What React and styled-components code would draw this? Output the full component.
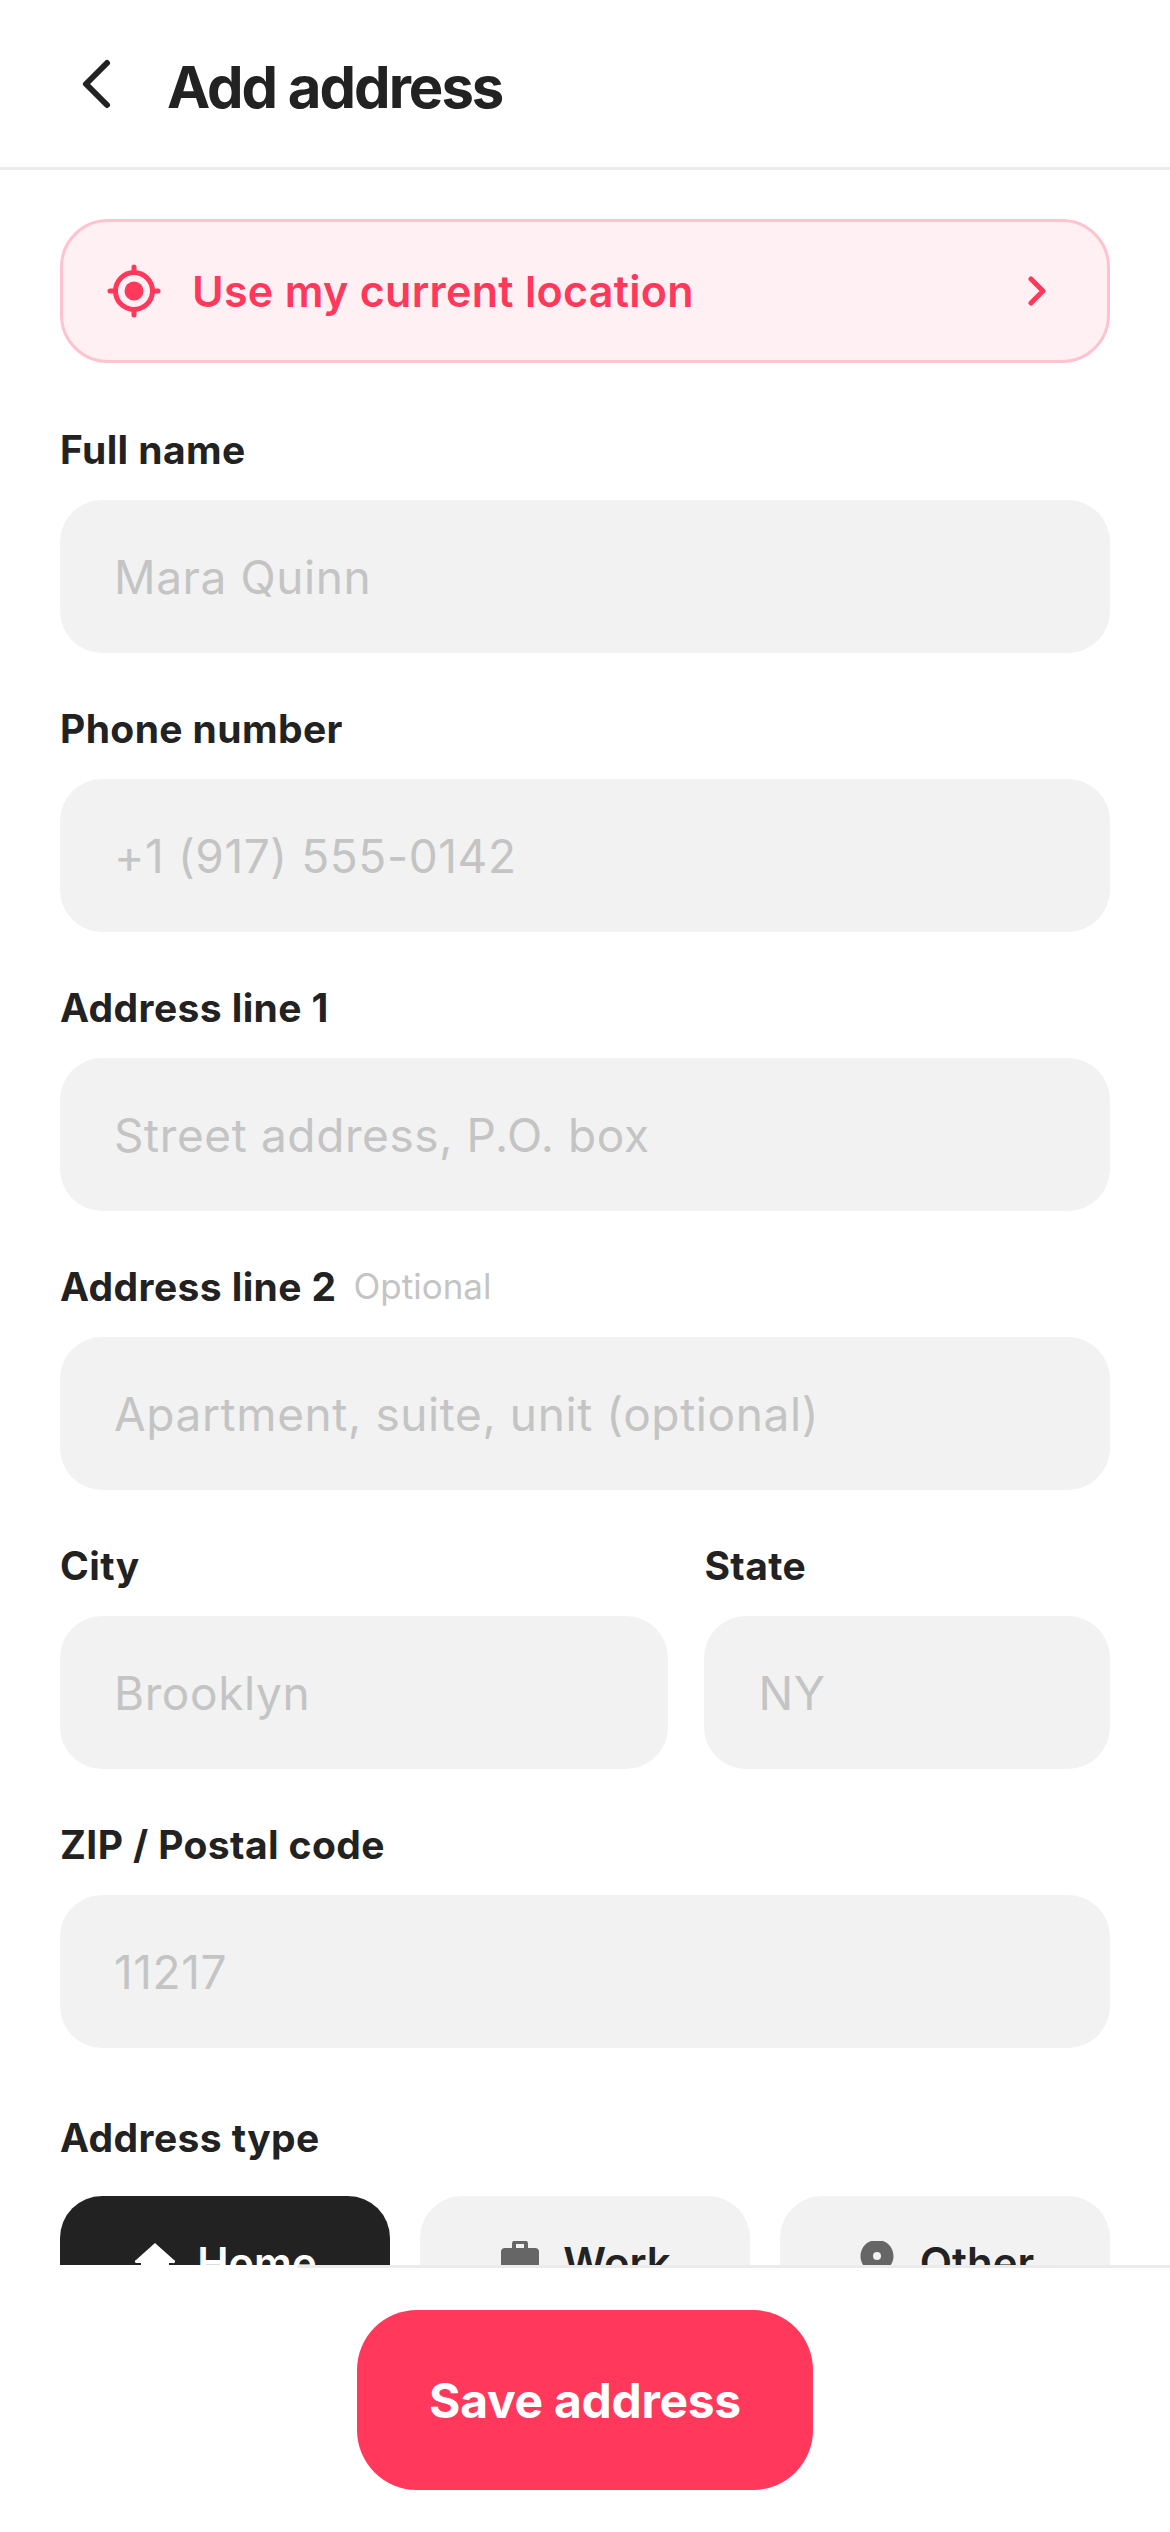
import React from "react";
import styled, { createGlobalStyle } from "styled-components";

const Global = createGlobalStyle`
    html, body { margin: 0; padding: 0; background: #fff; }
    * { box-sizing: border-box; }
`;

const Screen = styled.div`
    width: 1170px;
    height: 2532px;
    display: flex;
    flex-direction: column;
    background: #fff;
    color: #222;
    font-family: Inter, "Noto Sans", sans-serif;
    overflow: hidden;
`;
const Header = styled.header`
    height: 170px;
    flex: none;
    display: flex;
    align-items: center;
    gap: 46px;
    padding-left: 79px;
    border-bottom: 3px solid #ebebeb;
`;
const Title = styled.h1`
    margin: 0;
    padding-top: 6px;
    font-size: 58px;
    font-weight: 750;
    letter-spacing: -2px;
    line-height: 1;
`;
const Scroll = styled.main`
    flex: 1;
    min-height: 0;
    overflow: hidden;
    padding: 49px 60px 0;
`;
const LocationCard = styled.div`
    height: 144px;
    display: flex;
    align-items: center;
    padding: 0 58px 0 44px;
    background: #fff0f3;
    border: 3px solid #ffc2cf;
    border-radius: 48px;
    color: #ff385c;
    margin-bottom: 59px;
`;
const LocationText = styled.span`
    flex: 1;
    margin-left: 31px;
    font-size: 43px;
    font-weight: 600;
    letter-spacing: 0.3px;
`;
const Form = styled.div`
    display: flex;
    flex-direction: column;
    gap: 48px;
`;
const Row = styled.div`
    display: flex;
    gap: 36px;
`;
const Field = styled.div`
    flex: ${p => p.$flex || 1};
    min-width: 0;
`;
const Label = styled.div`
    height: 54px;
    margin-bottom: 24px;
    display: flex;
    align-items: center;
    gap: 17px;
    font-size: 39px;
    font-weight: 700;
    letter-spacing: 0.4px;
`;
const Hint = styled.span`
    font-size: 35px;
    font-weight: 400;
    color: #c4c4c4;
    letter-spacing: 0;
`;
const InputBox = styled.div`
    height: 153px;
    display: flex;
    align-items: center;
    padding: 0 54px;
    background: #f2f2f2;
    border-radius: 42px;
    font-size: 46px;
    letter-spacing: 0.6px;
    color: #c4c4c4;
`;
const TypeLabel = styled(Label)`
    margin-top: 62px;
    margin-bottom: 32px;
`;
const Chips = styled.div`
    display: grid;
    grid-template-columns: repeat(3, 1fr);
    gap: 30px;
`;
const Chip = styled.div`
    height: 132px;
    display: flex;
    align-items: center;
    justify-content: center;
    gap: 22px;
    border-radius: 42px;
    background: ${p => (p.$active ? "#222" : "#f2f2f2")};
    color: ${p => (p.$active ? "#fff" : "#222")};
    font-size: 42px;
    font-weight: 600;
`;
const Footer = styled.footer`
    flex: none;
    height: 267px;
    background: #fff;
`;
const FooterRule = styled.div`
    height: 3px;
    margin-left: 297px;
    background: #ebebeb;
`;
const SaveRow = styled.div`
    display: flex;
    justify-content: center;
    padding-top: 42px;
`;
const SaveButton = styled.button`
    width: 456px;
    height: 180px;
    border: 0;
    border-radius: 60px;
    background: #ff385c;
    color: #fff;
    font-family: inherit;
    font-size: 48px;
    font-weight: 700;
    letter-spacing: -0.3px;
`;

const BackIcon = () => (
    <svg width="42" height="54" viewBox="0 0 42 54" fill="none">
        <path d="M28 6 L7 27 L28 48" stroke="#222" strokeWidth="6" strokeLinecap="round" strokeLinejoin="round" />
    </svg>
);
const TargetIcon = () => (
    <svg width="54" height="54" viewBox="0 0 54 54" fill="none">
        <circle cx="27" cy="27" r="18.5" stroke="#ff385c" strokeWidth="5" />
        <circle cx="27" cy="27" r="9.5" fill="#ff385c" />
        <path d="M27 3v5M27 46v5M3 27h5M46 27h5" stroke="#ff385c" strokeWidth="5" strokeLinecap="round" />
    </svg>
);
const ChevronIcon = () => (
    <svg width="24" height="30" viewBox="0 0 24 30" fill="none">
        <path d="M6 3 L18 15 L6 27" stroke="#ff385c" strokeWidth="5" strokeLinecap="round" strokeLinejoin="round" />
    </svg>
);
const HomeIcon = () => (
    <svg width="42" height="42" viewBox="-1 0 42 42">
        <path d="M21 2 L40 19 a1.500 1.500 0 0 1 -1 3 H35 V38 H7 V22 H3 a1.500 1.500 0 0 1 -1 -3 Z" fill="#fff" />
    </svg>
);
const WorkIcon = () => (
    <svg width="42" height="42" viewBox="0 2 42 42">
        <path fillRule="evenodd" d="M13 9 V5 a4 4 0 0 1 4 -4 h8 a4 4 0 0 1 4 4 V9 h7 a4 4 0 0 1 4 4 V36 a4 4 0 0 1 -4 4 H6 a4 4 0 0 1 -4 -4 V13 a4 4 0 0 1 4 -4 Z M17 9 h8 V5 h-8 Z" fill="#666" />
    </svg>
);
const PinIcon = () => (
    <svg width="42" height="42" viewBox="0 2 42 42">
        <path fillRule="evenodd" d="M21 1 C11.500 1 4.500 8 4.500 17.500 C4.500 27 16 37 21 41 C26 37 37.500 27 37.500 17.500 C37.500 8 30.500 1 21 1 Z M21 13 a4 4 0 1 1 0 8 a4 4 0 1 1 0 -8 Z" fill="#666" />
    </svg>
);

const fields = [
    { label: "Full name", placeholder: "Mara Quinn" },
    { label: "Phone number", placeholder: "+1 (917) 555-0142" },
    { label: "Address line 1", placeholder: "Street address, P.O. box" },
    { label: "Address line 2", hint: "Optional", placeholder: "Apartment, suite, unit (optional)" },
];

const TextField = ({ label, hint, placeholder, flex }) => (
    <Field $flex={flex}>
        <Label>
            {label}
            {hint && <Hint>{hint}</Hint>}
        </Label>
        <InputBox>{placeholder}</InputBox>
    </Field>
);

const App = () => (
    <Screen>
        <Global />
        <Header>
            <BackIcon />
            <Title>Add address</Title>
        </Header>
        <Scroll>
            <LocationCard>
                <TargetIcon />
                <LocationText>Use my current location</LocationText>
                <ChevronIcon />
            </LocationCard>
            <Form>
                {fields.map(f => <TextField key={f.label} {...f} />)}
                <Row>
                    <TextField label="City" placeholder="Brooklyn" flex={1.5} />
                    <TextField label="State" placeholder="NY" flex={1} />
                </Row>
                <TextField label="ZIP / Postal code" placeholder="11217" />
            </Form>
            <TypeLabel>Address type</TypeLabel>
            <Chips>
                <Chip $active><HomeIcon />Home</Chip>
                <Chip><WorkIcon />Work</Chip>
                <Chip><PinIcon />Other</Chip>
            </Chips>
        </Scroll>
        <Footer>
            <FooterRule />
            <SaveRow>
                <SaveButton>Save address</SaveButton>
            </SaveRow>
        </Footer>
    </Screen>
);

export default App;
